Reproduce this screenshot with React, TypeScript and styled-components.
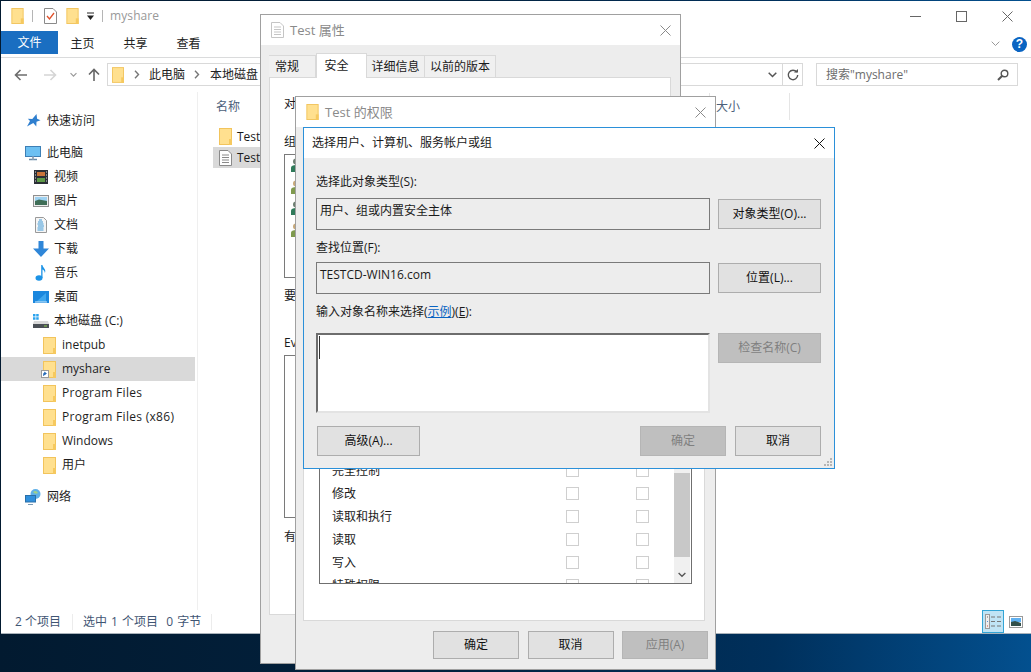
import React from "react";
import styled, { createGlobalStyle } from "styled-components";

const Global = createGlobalStyle`
  html, body { margin: 0; padding: 0; background: #021a33; overflow: hidden; }
  body { font: 12px/16px "Open Sans", "Noto Sans CJK SC", sans-serif; color: #1a1a1a; }
  * { box-sizing: border-box; }
`;

const Desktop = styled.div`
  position: relative;
  width: 1031px;
  height: 672px;
  overflow: hidden;
  background: linear-gradient(90deg, #021a30 0%, #02223f 45%, #00305c 75%, #03508f 100%);
`;

const Explorer = styled.div`
  position: absolute;
  left: 1px;
  top: 1px;
  width: 1030px;
  height: 633px;
  background: #fff;
  border-bottom: 1px solid #a9b2ba;
  display: flex;
  flex-direction: column;
`;

const TitleBar = styled.div`
  height: 30px;
  display: flex;
  align-items: center;
  padding-left: 10px;
  flex: none;
`;
const QuickSep = styled.span<{ $l: number; $r: number }>`
  width: 1px;
  height: 12px;
  background: #b5b5b5;
  margin: 0 ${(p) => p.$r}px 0 ${(p) => p.$l}px;
`;
const QuickItem = styled.span<{ $l: number }>`
  display: inline-flex;
  margin-left: ${(p) => p.$l}px;
`;
const TitleText = styled.span`
  color: #999;
  font-size: 12px;
  letter-spacing: 0.1px;
  margin-left: 7px;
`;
const WindowButtons = styled.div`
  margin-left: auto;
  display: flex;
  align-items: center;
  padding-right: 18px;
  gap: 35px;
`;

const RibbonTabs = styled.div`
  height: 27px;
  flex: none;
  display: flex;
  align-items: flex-start;
  border-bottom: 1px solid #dadbdc;
`;
const FileTab = styled.div`
  width: 57px;
  height: 23px;
  background: #1a6ec1;
  color: #fff;
  display: flex;
  align-items: center;
  justify-content: center;
`;
const RibbonTab = styled.div<{ $first?: boolean }>`
  width: 53px;
  height: 26px;
  line-height: 26px;
  text-align: center;
  margin-left: ${(p) => (p.$first ? "-2px" : "0")};
  color: #222;
`;
const RibbonEnd = styled.div`
  margin-left: auto;
  height: 26px;
  display: flex;
  align-items: center;
  gap: 12px;
  padding-right: 4px;
`;
const HelpBadge = styled.span`
  width: 15px;
  height: 15px;
  border-radius: 50%;
  background: #0a64c2;
  color: #fff;
  font: bold 12px/15px "Liberation Sans", sans-serif;
  text-align: center;
`;

const AddressRow = styled.div`
  height: 34px;
  flex: none;
  display: flex;
  align-items: flex-start;
  padding-top: 5px;
`;
const NavButtons = styled.div`
  width: 106px;
  height: 23px;
  display: flex;
  align-items: center;
  padding-left: 13px;
  gap: 17px;
`;
const NavDrop = styled.span`
  display: inline-flex;
  margin: 0 -6px 0 -4px;
`;
const AddressBox = styled.div`
  width: 696px;
  height: 23px;
  border: 1px solid #d9d9d9;
  display: flex;
  align-items: center;
  padding-left: 4px;
`;
const CrumbSep = styled.span<{ $l: number }>`
  display: inline-flex;
  margin-left: ${(p) => p.$l}px;
`;
const Crumb = styled.span<{ $l: number }>`
  color: #222;
  margin-left: ${(p) => p.$l}px;
`;
const AddressEnd = styled.div`
  margin-left: auto;
  height: 100%;
  display: flex;
  align-items: center;
`;
const AddressRefresh = styled.div`
  width: 20px;
  height: 100%;
  border-left: 1px solid #d9d9d9;
  margin-left: 5px;
  display: flex;
  align-items: center;
  justify-content: center;
`;
const SearchBox = styled.div`
  width: 202px;
  height: 23px;
  margin-left: 13px;
  border: 1px solid #d9d9d9;
  display: flex;
  align-items: center;
  justify-content: space-between;
  padding: 0 8px 0 9px;
  color: #6d6d6d;
`;

const MainArea = styled.div`
  flex: 1;
  display: flex;
  min-height: 0;
`;
const NavPane = styled.div`
  width: 197px;
  flex: none;
  border-right: 1px solid #efefef;
  padding-top: 17px;
`;
const NavGroup = styled.div`
  margin-bottom: 8px;
`;
const NavRow = styled.div<{ $level: number; $selected?: boolean }>`
  height: 24px;
  width: 194px;
  display: flex;
  align-items: center;
  padding-left: ${(p) => [24, 32, 42][p.$level]}px;
  gap: ${(p) => [6, 5, 6][p.$level]}px;
  background: ${(p) => (p.$selected ? "#d9d9d9" : "transparent")};
  color: #1e1e1e;
`;
const NavLabel = styled.span<{ $wide?: boolean }>`
  letter-spacing: ${(p) => (p.$wide ? "0.3px" : "0")};
`;
const IconSlot = styled.span`
  position: relative;
  display: inline-flex;
`;
const ShortcutBadge = styled.span`
  position: absolute;
  left: -2px;
  bottom: 0;
  width: 8px;
  height: 8px;
  display: inline-flex;
`;

const FileArea = styled.div`
  flex: 1;
  position: relative;
`;
const HeaderRow = styled.div`
  height: 27px;
  margin-top: 1px;
  display: flex;
  color: #4c607a;
  padding-left: 18px;
`;
const HeaderCell = styled.div<{ $w: number }>`
  width: ${(p) => p.$w}px;
  line-height: 27px;
  padding-left: ${(p) => (p.$w < 100 ? 6 : 0)}px;
  border-right: 1px solid #e5e5e5;
`;
const FileRow = styled.div<{ $selected?: boolean }>`
  height: 21px;
  width: 160px;
  margin-left: 15px;
  display: flex;
  align-items: center;
  gap: 5px;
  padding-left: 6px;
  background: ${(p) => (p.$selected ? "#d9d9d9" : "transparent")};
`;
const FileRows = styled.div`
  padding-top: 6px;
`;

const StatusBar = styled.div`
  height: 23px;
  flex: none;
  display: flex;
  align-items: center;
  color: #3f5573;
`;
const StatusCell = styled.span<{ $w: number }>`
  width: ${(p) => p.$w}px;
  padding-left: ${(p) => (p.$w > 100 ? 10 : 14)}px;
  word-spacing: ${(p) => (p.$w > 100 ? 1 : 0)}px;
  border-right: 1px solid #ececec;
  white-space: pre;
`;
const ViewButtons = styled.div`
  margin-left: auto;
  display: flex;
  align-items: flex-end;
  height: 100%;
  gap: 4px;
  padding-right: 7px;
`;
const ViewButton = styled.div<{ $active?: boolean }>`
  width: ${(p) => (p.$active ? 22 : 16)}px;
  height: 23px;
  display: flex;
  align-items: center;
  justify-content: center;
  background: ${(p) => (p.$active ? "#c0e4f5" : "transparent")};
  border: ${(p) => (p.$active ? "1px solid #33a5d6" : "none")};
`;

const GreyWindow = styled.div<{ $l: number; $t: number; $w: number; $h: number }>`
  position: absolute;
  left: ${(p) => p.$l}px;
  top: ${(p) => p.$t}px;
  width: ${(p) => p.$w}px;
  height: ${(p) => p.$h}px;
  background: #ededed;
  border: 1px solid #a0a0a0;
  display: flex;
  flex-direction: column;
`;
const WinTitle = styled.div`
  height: 30px;
  flex: none;
  background: #fff;
  display: flex;
  align-items: center;
  padding: 0 9px 0 10px;
  gap: 6px;
  color: #8a8a8a;
  font-size: 13px;
`;
const CloseSlot = styled.span`
  margin-left: auto;
  display: inline-flex;
`;

const TabStrip = styled.div`
  height: 25px;
  margin-top: 8px;
  padding-left: 8px;
  display: flex;
  align-items: flex-end;
  position: relative;
  z-index: 1;
`;
const Tab = styled.div<{ $active?: boolean; $w: number; $pr?: number }>`
  width: ${(p) => p.$w}px;
  height: ${(p) => (p.$active ? 25 : 23)}px;
  padding-right: ${(p) => p.$pr ?? 0}px;
  background: ${(p) => (p.$active ? "#fff" : "#f0f0f0")};
  border: 1px solid #d9d9d9;
  border-bottom: ${(p) => (p.$active ? "none" : "1px solid #d9d9d9")};
  border-left: ${(p) => (p.$active ? "1px solid #d9d9d9" : "none")};
  display: flex;
  align-items: center;
  justify-content: center;
  color: #1a1a1a;
`;
const TabPanel = styled.div`
  flex: none;
  height: 538px;
  width: 402px;
  margin: -1px 0 0 8px;
  background: #fff;
  border: 1px solid #d9d9d9;
  padding: 18px 14px;
`;
const PropLabel = styled.div<{ $gap?: number }>`
  margin-top: ${(p) => p.$gap ?? 0}px;
  white-space: nowrap;
`;
const UserList = styled.div<{ $h: number }>`
  height: ${(p) => p.$h}px;
  margin-top: 4px;
  border: 1px solid #7a7a7a;
  padding: 3px 0 0 6px;
  display: flex;
  flex-direction: column;
  gap: 7.5px;
`;

const PermPanel = styled.div`
  flex: none;
  height: 494px;
  width: 402px;
  margin-left: 7px;
  background: #fff;
  border: 1px solid #d9d9d9;
  padding: 313px 12px 0 15px;
  border-top: none;
`;
const PermList = styled.div`
  height: 144px;
  width: 373px;
  border: 1px solid #6f6f6f;
  border-top: none;
  overflow: hidden;
  display: flex;
`;
const PermRows = styled.div`
  flex: 1;
  padding-top: 19px;
`;
const PermRow = styled.div`
  height: 23px;
  display: grid;
  grid-template-columns: 234px 13px 57px 13px;
  align-items: center;
  padding-left: 12px;
  white-space: nowrap;
`;
const Check = styled.span`
  width: 13px;
  height: 13px;
  border: 1px solid #cfcfcf;
  background: #fff;
`;
const Scrollbar = styled.div`
  width: 16px;
  margin-right: 1px;
  background: #f0f0f0;
  display: flex;
  flex-direction: column;
  align-items: center;
`;
const ScrollThumb = styled.div`
  width: 100%;
  height: 84px;
  margin-top: 33px;
  background: #c8c8c8;
  flex: none;
`;
const ScrollArrow = styled.div`
  flex: 1;
  display: flex;
  align-items: center;
  justify-content: center;
  padding-top: 10px;
`;
const FooterRow = styled.div`
  display: flex;
  justify-content: flex-end;
  gap: 8.5px;
  margin-top: 10px;
  padding-right: 7px;
`;
const WinButton = styled.button<{ $w: number; $disabled?: boolean; $h?: number }>`
  width: ${(p) => p.$w}px;
  height: ${(p) => p.$h ?? 30}px;
  flex: none;
  padding: 0;
  font: inherit;
  background: ${(p) => (p.$disabled ? "#bfbfbf" : "#e1e1e1")};
  color: ${(p) => (p.$disabled ? "#7f7f7f" : "#111")};
  border: 1px solid ${(p) => (p.$disabled ? "#b5b5b5" : "#adadad")};
`;

const SelectDialog = styled.div`
  position: absolute;
  left: 303px;
  top: 127px;
  width: 532px;
  height: 342px;
  background: #ededed;
  border: 1px solid #2b90d9;
  display: flex;
  flex-direction: column;
`;
const DialogTitle = styled.div`
  height: 30px;
  flex: none;
  background: #fff;
  display: flex;
  align-items: center;
  padding: 0 9px 0 8px;
  color: #1a1a1a;
`;
const DialogBody = styled.div`
  flex: 1;
  position: relative;
  padding: 16px 13px 0 12px;
  display: flex;
  flex-direction: column;
`;
const FieldLabel = styled.div<{ $after: number }>`
  height: 16px;
  margin-bottom: ${(p) => p.$after}px;
`;
const FieldRow = styled.div<{ $after: number }>`
  display: flex;
  gap: 8px;
  margin-bottom: ${(p) => p.$after}px;
  align-items: flex-start;
`;
const ReadField = styled.div`
  width: 394px;
  height: 32px;
  border: 1px solid #7a7a7a;
  padding: 4px 3px;
`;
const SideButton = styled(WinButton)`
  margin-top: ${(p) => (p.$disabled ? 0 : 1)}px;
`;
const NameInput = styled.div`
  width: 394px;
  height: 80px;
  background: #fff;
  border: 2px solid #e3e3e3;
  border-top-color: #6d6d6d;
  border-left-color: #6d6d6d;
  padding: 1px;
`;
const Caret = styled.div`
  width: 1px;
  height: 23px;
  background: #333;
`;
const LinkText = styled.span`
  color: #0a64c2;
  text-decoration: underline;
`;
const Underlined = styled.span`
  text-decoration: underline;
`;
const BottomRow = styled.div`
  display: flex;
  margin-top: 13px;
  gap: 9px;
  padding-left: 1px;
`;
const PushRight = styled.div`
  margin-left: auto;
`;
const Grip = styled.span`
  position: absolute;
  right: 1px;
  bottom: 1px;
  display: inline-flex;
`;

/* ---------- drawings ---------- */
const Folder = ({ w = 13, h = 17 }: { w?: number; h?: number }) => (
  <svg width={w} height={h} viewBox="0 0 13 17">
    <rect x="0.5" y="0.5" width="12" height="16" fill="#ffe08f" stroke="#f2c45c" />
    <rect x="10" y="11" width="3" height="6" fill="#f6c95f" />
  </svg>
);
const Doc = ({ color = "#8a8a8a", w = 13, h = 16 }: { color?: string; w?: number; h?: number }) => (
  <svg width={w} height={h} viewBox="0 0 13 16">
    <path d="M.5.5h8.500l3.500 3.500v11.500H.5z" fill="#fff" stroke={color} />
    <path d="M3 5h7M3 7.500h7M3 10h7M3 12.500h7" stroke={color} />
  </svg>
);
const CheckDoc = () => (
  <svg width="13" height="16" viewBox="0 0 13 16">
    <path d="M.5.5h8.500l3.500 3.500v11.500H.5z" fill="#fff" stroke="#8a8a8a" />
    <path d="M3 8l2.500 3L10 5" fill="none" stroke="#e0502a" strokeWidth="1.3" />
  </svg>
);
const CloseX = ({ color = "#1a1a1a", s = 11 }: { color?: string; s?: number }) => (
  <svg width={s} height={s} viewBox="0 0 11 11">
    <path d="M.5.5l10 10M10.500.5l-10 10" stroke={color} fill="none" />
  </svg>
);
const Minimize = () => (
  <svg width="11" height="11" viewBox="0 0 11 11"><path d="M0 5.500h11" stroke="#666" /></svg>
);
const Maximize = () => (
  <svg width="11" height="11" viewBox="0 0 11 11"><rect x=".5" y=".5" width="10" height="10" fill="none" stroke="#666" /></svg>
);
const Chevron = ({ color = "#777", w = 9, sw = 1.5 }: { color?: string; w?: number; sw?: number }) => (
  <svg width={w} height="6" viewBox="0 0 9 6"><path d="M.7.7l3.800 3.800L8.300.7" fill="none" stroke={color} strokeWidth={sw} /></svg>
);
const ChevronRight = () => (
  <svg width="6" height="9" viewBox="0 0 6 9"><path d="M1 .8l3.500 3.700L1 8.200" fill="none" stroke="#777" strokeWidth="1.4" /></svg>
);
const QuickDrop = () => (
  <svg width="9" height="9" viewBox="0 0 9 9"><path d="M1 1h7" stroke="#222" /><path d="M1 3.500h7L4.500 8z" fill="#222" /></svg>
);
const ArrowLeft = ({ color }: { color: string }) => (
  <svg width="13" height="12" viewBox="0 0 13 12"><path d="M13 6H2M6.500 1L1.500 6l5 5" fill="none" stroke={color} strokeWidth="1.6" /></svg>
);
const ArrowRight = ({ color }: { color: string }) => (
  <svg width="13" height="12" viewBox="0 0 13 12"><path d="M0 6h11M6.500 1l5 5-5 5" fill="none" stroke={color} strokeWidth="1.6" /></svg>
);
const ArrowUp = () => (
  <svg width="12" height="13" viewBox="0 0 12 13"><path d="M6 13V2M1 6.500l5-5 5 5" fill="none" stroke="#666" strokeWidth="1.6" /></svg>
);
const Refresh = () => (
  <svg width="12" height="12" viewBox="0 0 12 12">
    <path d="M9.800 3.200A4.700 4.700 0 1 0 10.700 6" fill="none" stroke="#555" strokeWidth="1.4" />
    <path d="M7 3.500h4V0z" fill="#555" />
  </svg>
);
const Magnifier = () => (
  <svg width="12" height="12" viewBox="0 0 12 12">
    <circle cx="7.500" cy="4.500" r="3.300" fill="none" stroke="#555" strokeWidth="1.4" />
    <path d="M5 7L1 11" stroke="#555" strokeWidth="2" />
  </svg>
);
const StarIcon = () => (
  <svg width="16" height="16" viewBox="0 0 16 16">
    <path d="M11.500 1l.6 4.700 3.400 1.500-4 1.600-.2 4.600-3-3.300-6.300 3.400L5 8 2.800 5.800l4.500.2z" fill="#2f7fcf" />
  </svg>
);
const PcIcon = () => (
  <svg width="16" height="16" viewBox="0 0 16 16">
    <rect x=".5" y="1.500" width="15" height="10" fill="#6cc0f2" stroke="#3d7fb5" />
    <path d="M4 14.500h8" stroke="#6a8ca8" strokeWidth="1.5" />
    <path d="M7 11.500h2v3H7z" fill="#9ab" />
  </svg>
);
const VideoIcon = () => (
  <svg width="16" height="16" viewBox="0 0 16 16">
    <rect x="1" y="1" width="14" height="14" fill="#2b2f36" />
    <rect x="4" y="3" width="8" height="4" fill="#c9733a" />
    <rect x="4" y="9" width="8" height="4" fill="#5e9a48" />
    <path d="M2 3h1M2 6h1M2 9h1M2 12h1M13 3h1M13 6h1M13 9h1M13 12h1" stroke="#ddd" />
  </svg>
);
const PictureIcon = () => (
  <svg width="16" height="16" viewBox="0 0 16 16">
    <rect x=".5" y="2.500" width="15" height="11" fill="#eee" stroke="#8f8f8f" />
    <rect x="2" y="4" width="12" height="4" fill="#9fd2f2" />
    <path d="M2 8l4-1.500L14 8v4H2z" fill="#3f6e57" />
  </svg>
);
const DocsIcon = () => (
  <svg width="16" height="16" viewBox="0 0 16 16">
    <path d="M2.500.5h8l3 3v12h-11z" fill="#f5f5f5" stroke="#999" />
    <path d="M6 3h3M5 5h5M4.500 7h6M5 9h6M4.500 11h6M4.500 13h6" stroke="#3f9ad8" />
  </svg>
);
const DownloadIcon = () => (
  <svg width="16" height="16" viewBox="0 0 16 16"><path d="M5.500 0h5v7.500H16L8 16 0 7.500h5.500z" fill="#2f86d8" /></svg>
);
const MusicIcon = () => (
  <svg width="16" height="16" viewBox="0 0 16 16">
    <ellipse cx="6" cy="13" rx="3.500" ry="2.800" fill="#1c93e6" />
    <path d="M8.200 13V0h1.200c.5 3 4 4 2.500 8-.3-2.500-1.700-3.200-2.400-3.500V13z" fill="#1c93e6" />
  </svg>
);
const DesktopIcon = () => (
  <svg width="16" height="16" viewBox="0 0 16 16">
    <rect x="0" y="2" width="16" height="12" fill="#1b87de" />
    <path d="M3 13L13 4v9z" fill="#3ea6ee" />
    <path d="M2 13h12" stroke="#cfe8fa" />
  </svg>
);
const DriveIcon = () => (
  <svg width="16" height="16" viewBox="0 0 16 16">
    <path d="M0 1h2.500v2.500H0zM3.200 1h2.500v2.500H3.200zM0 4.200h2.500v2.500H0zM3.200 4.200h2.500v2.500H3.200z" fill="#2ba3ee" />
    <path d="M1 8h14l1 3H0z" fill="#d9d9d9" />
    <rect x="0" y="11" width="16" height="4" fill="#4a4f55" />
    <path d="M11 13h3" stroke="#8fd14f" />
  </svg>
);
const NetworkIcon = () => (
  <svg width="16" height="16" viewBox="0 0 16 16">
    <circle cx="10.500" cy="5" r="5" fill="#5fb0e8" />
    <path d="M8 3c2-2 4-1 5 1-2 1-3 1-5-1z" fill="#9fd18a" />
    <rect x=".5" y="6.500" width="10" height="6.500" fill="#2f8fdc" stroke="#2a6fa8" />
    <path d="M3 15.500h5" stroke="#7a9ab5" />
  </svg>
);
const ShortcutArrow = () => (
  <svg width="8" height="8" viewBox="0 0 8 8">
    <rect x=".5" y=".5" width="7" height="7" fill="#fff" stroke="#9a9a9a" />
    <path d="M2.500 6V3.500h2M3.500 2L5.500 3.500 3.500 5z" fill="#2468b5" stroke="#2468b5" strokeWidth=".6" />
  </svg>
);
const Person = ({ dark }: { dark?: boolean }) => (
  <svg width="14" height="14" viewBox="0 0 14 14">
    <circle cx="5" cy="3.500" r="3" fill={dark ? "#6d7f72" : "#c8a97a"} />
    <path d="M0 14V9.500C0 8 2 7 5 7s5 1 5 2.500V14z" fill={dark ? "#2f7a5a" : "#7f9a4e"} />
  </svg>
);
const DetailsView = () => (
  <svg width="16" height="15" viewBox="0 0 16 15">
    <rect x=".5" y=".5" width="4" height="14" fill="#eee" stroke="#9a9a9a" />
    <path d="M2 3h1" stroke="#666" /><path d="M2 7.500h1" stroke="#5a8fd0" /><path d="M2 12h1" stroke="#d0503a" />
    <path d="M6 3h4M12 3h4M6 7.500h4M12 7.500h4M6 12h4M12 12h4" stroke="#777" strokeWidth="1.2" />
  </svg>
);
const ThumbView = () => (
  <svg width="14" height="12" viewBox="0 0 14 12">
    <rect x=".5" y=".5" width="13" height="11" fill="#fff" stroke="#9a9a9a" />
    <rect x="2" y="2" width="10" height="4" fill="#5fb0f0" />
    <path d="M2 6l4-1 6 2v3H2z" fill="#33504a" />
  </svg>
);
const GripDots = () => (
  <svg width="9" height="9" viewBox="0 0 9 9">
    <path d="M6 0h2v2H6zM3 3h2v2H3zM6 3h2v2H6zM0 6h2v2H0zM3 6h2v2H3zM6 6h2v2H6z" fill="#b5b5b5" />
  </svg>
);

const navGroups: { level: number; label: string; icon: React.ReactNode; selected?: boolean; shortcut?: boolean; wide?: boolean }[][] = [
  [{ level: 0, label: "快速访问", icon: <StarIcon /> }],
  [
    { level: 0, label: "此电脑", icon: <PcIcon /> },
    { level: 1, label: "视频", icon: <VideoIcon /> },
    { level: 1, label: "图片", icon: <PictureIcon /> },
    { level: 1, label: "文档", icon: <DocsIcon /> },
    { level: 1, label: "下载", icon: <DownloadIcon /> },
    { level: 1, label: "音乐", icon: <MusicIcon /> },
    { level: 1, label: "桌面", icon: <DesktopIcon /> },
    { level: 1, label: "本地磁盘 (C:)", icon: <DriveIcon /> },
    { level: 2, label: "inetpub", icon: <Folder /> },
    { level: 2, label: "myshare", icon: <Folder />, selected: true, shortcut: true },
    { level: 2, label: "Program Files", icon: <Folder />, wide: true },
    { level: 2, label: "Program Files (x86)", icon: <Folder />, wide: true },
    { level: 2, label: "Windows", icon: <Folder /> },
    { level: 2, label: "用户", icon: <Folder /> },
  ],
  [{ level: 0, label: "网络", icon: <NetworkIcon /> }],
];

const perms = ["完全控制", "修改", "读取和执行", "读取", "写入", "特殊权限"];

export default function App() {
  return (
    <Desktop>
      <Global />
      <Explorer>
        <TitleBar>
          <Folder w={13} h={16} />
          <QuickSep $l={8} $r={11} />
          <CheckDoc />
          <QuickItem $l={9}><Folder w={13} h={16} /></QuickItem>
          <QuickItem $l={7}><QuickDrop /></QuickItem>
          <QuickSep $l={7} $r={0} />
          <TitleText>myshare</TitleText>
          <WindowButtons>
            <Minimize />
            <Maximize />
            <CloseX color="#666" />
          </WindowButtons>
        </TitleBar>
        <RibbonTabs>
          <FileTab>文件</FileTab>
          <RibbonTab $first>主页</RibbonTab>
          <RibbonTab>共享</RibbonTab>
          <RibbonTab>查看</RibbonTab>
          <RibbonEnd>
            <Chevron color="#999" w={9} sw={1} />
            <HelpBadge>?</HelpBadge>
          </RibbonEnd>
        </RibbonTabs>
        <AddressRow>
          <NavButtons>
            <ArrowLeft color="#6d6d6d" />
            <ArrowRight color="#d5d5d5" />
            <NavDrop><Chevron color="#999" w={7} /></NavDrop>
            <ArrowUp />
          </NavButtons>
          <AddressBox>
            <Folder w={12} h={16} />
            <CrumbSep $l={10}><ChevronRight /></CrumbSep>
            <Crumb $l={9}>此电脑</Crumb>
            <CrumbSep $l={9}><ChevronRight /></CrumbSep>
            <Crumb $l={10}>本地磁盘</Crumb>
            <AddressEnd>
              <Chevron color="#555" />
              <AddressRefresh><Refresh /></AddressRefresh>
            </AddressEnd>
          </AddressBox>
          <SearchBox>
            <span>搜索"myshare"</span>
            <Magnifier />
          </SearchBox>
        </AddressRow>
        <MainArea>
          <NavPane>
            {navGroups.map((g, i) => (
              <NavGroup key={i}>
                {g.map((r) => (
                  <NavRow key={r.label} $level={r.level} $selected={r.selected}>
                    <IconSlot>
                      {r.icon}
                      {r.shortcut && <ShortcutBadge><ShortcutArrow /></ShortcutBadge>}
                    </IconSlot>
                    <NavLabel $wide={r.wide}>{r.label}</NavLabel>
                  </NavRow>
                ))}
              </NavGroup>
            ))}
          </NavPane>
          <FileArea>
            <HeaderRow>
              <HeaderCell $w={494}>名称</HeaderCell>
              <HeaderCell $w={80}>大小</HeaderCell>
            </HeaderRow>
            <FileRows>
              <FileRow><Folder w={13} h={17} />Test</FileRow>
              <FileRow $selected><Doc />Test</FileRow>
            </FileRows>
          </FileArea>
        </MainArea>
        <StatusBar>
          <StatusCell $w={72}>2 个项目</StatusCell>
          <StatusCell $w={139}>选中 1 个项目  0 字节</StatusCell>
          <ViewButtons>
            <ViewButton $active><DetailsView /></ViewButton>
            <ViewButton><ThumbView /></ViewButton>
          </ViewButtons>
        </StatusBar>
      </Explorer>

      <GreyWindow $l={260} $t={14} $w={421} $h={650}>
        <WinTitle>
          <Doc color="#c5c5c5" />
          Test 属性
          <CloseSlot><CloseX color="#8a8a8a" s={11} /></CloseSlot>
        </WinTitle>
        <TabStrip>
          <Tab $w={47} $pr={10}>常规</Tab>
          <Tab $w={51} $pr={10} $active>安全</Tab>
          <Tab $w={58}>详细信息</Tab>
          <Tab $w={71}>以前的版本</Tab>
        </TabStrip>
        <TabPanel>
          <PropLabel>对象名称:</PropLabel>
          <PropLabel $gap={22}>组或用户名:</PropLabel>
          <UserList $h={124}>
            <Person dark />
            <Person />
            <Person dark />
            <Person />
          </UserList>
          <PropLabel $gap={10}>要更改权限,请单击"编辑"。</PropLabel>
          <PropLabel $gap={31}>Everyone 的权限</PropLabel>
          <UserList $h={163} />
          <PropLabel $gap={11}>有关特殊权限或高级设置,请单击"高级"。</PropLabel>
        </TabPanel>
      </GreyWindow>

      <GreyWindow $l={295} $t={96} $w={421} $h={574}>
        <WinTitle>
          <Folder w={13} h={16} />
          Test 的权限
          <CloseSlot><CloseX color="#8a8a8a" s={11} /></CloseSlot>
        </WinTitle>
        <PermPanel>
          <PermList>
            <PermRows>
              {perms.map((p) => (
                <PermRow key={p}>
                  <span>{p}</span>
                  <Check />
                  <span />
                  <Check />
                </PermRow>
              ))}
            </PermRows>
            <Scrollbar>
              <ScrollThumb />
              <ScrollArrow><Chevron color="#555" w={8} /></ScrollArrow>
            </Scrollbar>
          </PermList>
        </PermPanel>
        <FooterRow>
          <WinButton $w={86} $h={28}>确定</WinButton>
          <WinButton $w={86} $h={28}>取消</WinButton>
          <WinButton $w={86} $h={28} $disabled>应用(A)</WinButton>
        </FooterRow>
      </GreyWindow>

      <SelectDialog>
        <DialogTitle>
          选择用户、计算机、服务帐户或组
          <CloseSlot><CloseX color="#111" s={11} /></CloseSlot>
        </DialogTitle>
        <DialogBody>
          <FieldLabel $after={8}>选择此对象类型(S):</FieldLabel>
          <FieldRow $after={10}>
            <ReadField>用户、组或内置安全主体</ReadField>
            <SideButton $w={103}>对象类型(O)...</SideButton>
          </FieldRow>
          <FieldLabel $after={6}>查找位置(F):</FieldLabel>
          <FieldRow $after={10}>
            <ReadField>TESTCD-WIN16.com</ReadField>
            <SideButton $w={103}>位置(L)...</SideButton>
          </FieldRow>
          <FieldLabel $after={13}>输入对象名称来选择(<LinkText>示例</LinkText>)(<Underlined>E</Underlined>):</FieldLabel>
          <FieldRow $after={0}>
            <NameInput><Caret /></NameInput>
            <SideButton $w={103} $disabled>检查名称(C)</SideButton>
          </FieldRow>
          <BottomRow>
            <WinButton $w={103}>高级(A)...</WinButton>
            <PushRight />
            <WinButton $w={86} $disabled>确定</WinButton>
            <WinButton $w={86}>取消</WinButton>
          </BottomRow>
          <Grip><GripDots /></Grip>
        </DialogBody>
      </SelectDialog>
    </Desktop>
  );
}
